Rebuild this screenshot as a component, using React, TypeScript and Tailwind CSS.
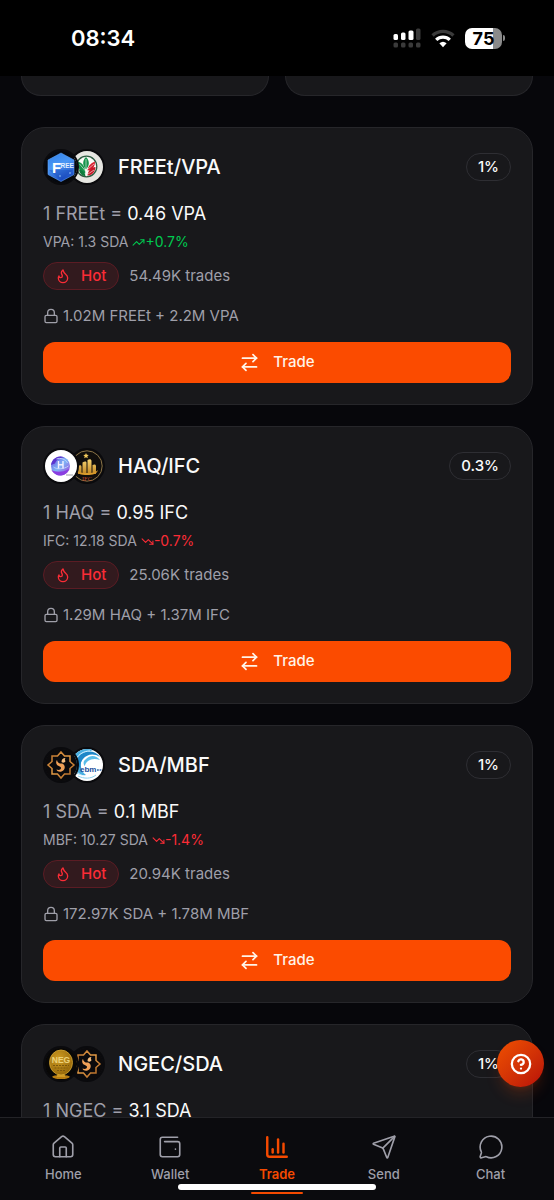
import React from "react";
import {
  ArrowRightLeft,
  ChartColumn,
  CircleQuestionMark,
  Flame,
  House,
  Lock,
  MessageCircle,
  Send,
  TrendingDown,
  TrendingUp,
  WalletMinimal,
} from "lucide-react";

function FreeLogo() {
  return (
    <svg viewBox="0 0 32 32" className="size-full" aria-hidden="true">
      <defs>
        <linearGradient id="free" x1="0" y1="0" x2="0.4" y2="1">
          <stop offset="0" stopColor="#2f7fe8" />
          <stop offset="0.5" stopColor="#4a97f5" />
          <stop offset="1" stopColor="#1d4fc4" />
        </linearGradient>
      </defs>
      <rect width="32" height="32" fill="#05070d" />
      <path d="M16 2 29 9v14.500L16 30.500 3 23.500V9Z" fill="url(#free)" stroke="#5ea5f8" strokeWidth="0.6" />
      <path d="M4 19 16 29.500 28 19" fill="#1745b5" opacity="0.35" />
      <text x="7" y="21.500" fontSize="15" fontWeight="700" fill="#fff" fontFamily="Liberation Sans, sans-serif">F</text>
      <text x="15.500" y="17" fontSize="6.500" fontWeight="700" fill="#e3f0ff" fontFamily="Liberation Sans, sans-serif">REE</text>
      <circle cx="15" cy="25" r="0.8" fill="#9fd0ff" />
      <circle cx="25" cy="22" r="0.8" fill="#9fd0ff" />
    </svg>
  );
}

function VpaLogo() {
  return (
    <svg viewBox="0 0 32 32" className="size-full" aria-hidden="true">
      <rect width="32" height="32" fill="#e6e6e1" />
      <circle cx="15.500" cy="15.500" r="10.300" fill="#fbfbf7" stroke="#2e5b42" strokeWidth="1.300" />
      <path d="M15 6c3.500 3.500 4 8 0 12.500-4-4.500-3.500-9 0-12.500Z" fill="#16944c" />
      <path d="M7 10.500c4.500 1.500 7 5 7.500 12-5.500-1.500-8-5.500-7.500-12Z" fill="#16944c" />
      <path d="M8 18.500c3 .5 6 2.500 6.500 6.500-3.500 0-6-2.500-6.500-6.500Z" fill="#0f7c3d" />
      <path d="M24 10.500c-4.500 1.500-7 5-7.500 9 4.500-.5 7.500-3.500 7.500-9Z" fill="#d81f2e" />
      <path d="M24.500 16c-4.500.5-7.500 3.500-8 8.500 5-.5 7.500-3.500 8-8.500Z" fill="#c81726" />
      <path d="M15 8v17M8.500 13l6 7M23 13l-6 5M23 19l-6 4" stroke="#f7f7f2" strokeWidth="0.600" fill="none" />
    </svg>
  );
}

function HaqLogo() {
  return (
    <svg viewBox="0 0 32 32" className="size-full" aria-hidden="true">
      <defs>
        <linearGradient id="haq" x1="0" y1="0" x2="1" y2="1">
          <stop offset="0" stopColor="#6b4be0" />
          <stop offset="0.5" stopColor="#7fb6f5" />
          <stop offset="1" stopColor="#a033d8" />
        </linearGradient>
      </defs>
      <rect width="32" height="32" fill="#fff" />
      <circle cx="15.500" cy="16" r="9.500" fill="url(#haq)" />
      <path d="M6 15a9.500 9.500 0 0 1 13.500-7.500c-4 0-8 1.500-9.500 6Z" fill="#5b35cf" />
      <path d="M6.500 20c4 2 10 3 17.500-1-2 5-6 6.500-9 6.500S8 23.500 6.500 20Z" fill="#8a3ee0" />
      <path d="M8.500 17c3 2.500 10 2.500 15-1M11.500 9c4-1.500 9 0 11 4" stroke="#c9ddff" strokeWidth="0.8" fill="none" />
      <path d="M13.500 11v7.500M18 11v7.500M13.500 14.800h4.500" stroke="#f3efff" strokeWidth="1.400" />
      <path d="M21 25h7" stroke="#5a5a66" strokeWidth="0.6" />
    </svg>
  );
}

function IfcLogo() {
  return (
    <svg viewBox="0 0 32 32" className="size-full" aria-hidden="true">
      <defs>
        <linearGradient id="ifc" x1="0" y1="0" x2="0" y2="1">
          <stop offset="0" stopColor="#f7d774" />
          <stop offset="1" stopColor="#c08420" />
        </linearGradient>
      </defs>
      <rect width="32" height="32" fill="#17130f" />
      <circle cx="16" cy="16" r="15.200" fill="#100e0c" stroke="#8a7448" strokeWidth="1" />
      <path d="m15 3 .8 1.800 2 .2-1.500 1.300.5 2L15 7.300l-1.800 1 .5-2L12.200 5l2-.2Z" fill="#f5cb5c" />
      <path d="M7 16c2-1 3.500-1 3.500 1v7H7ZM11.500 12.500c2-1.500 4-1.500 4 0V24h-4ZM16.500 10c2-1.500 4-1 4 1v13h-4ZM21.500 15c2-1 3.500-.5 3.500 1v8h-3.500Z" fill="url(#ifc)" />
      <path d="M5 20c1 4 5 5 11 5s10-1 11-5c-2 2.500-6 3-11 3S7 22.500 5 20Z" fill="#d99a2b" />
      <text x="16" y="31" fontSize="6.500" textAnchor="middle" fill="#b5442b" fontFamily="Liberation Serif, serif">IFC</text>
    </svg>
  );
}

function SdaLogo() {
  return (
    <svg viewBox="0 0 32 32" className="size-full" aria-hidden="true">
      <defs>
        <linearGradient id="sda" x1="0" y1="0" x2="1" y2="1">
          <stop offset="0" stopColor="#b8702c" />
          <stop offset="0.5" stopColor="#e29a45" />
          <stop offset="1" stopColor="#a85f20" />
        </linearGradient>
      </defs>
      <rect width="32" height="32" fill="#0b0a0c" />
      <path
        d="M16 3 19.500 7H25V12.500L29 16 25 19.500V25H19.500L16 29 12.500 25H7V19.500L3 16 7 12.500V7H12.500Z"
        fill="none"
        stroke="url(#sda)"
        strokeWidth="1.500"
      />
      <path d="M12 11c.5 3 3 4 5 3.500 3.500 1 4 6.500-.5 8-2 .6-4.500 0-5-2 2 .8 4.500.5 4.500-1.500s-3.500-1.500-4.500-4c-.5-1.500-.5-3 .5-4Z" fill="#f0a057" />
      <path d="M16.500 13c0-2.500 1.500-4 4-4-.8 1-.8 1.800 0 3-.5 1.800-2.500 2.200-4 1Z" fill="#f6bd7d" />
    </svg>
  );
}

function MbfLogo() {
  return (
    <svg viewBox="0 0 32 32" className="size-full" aria-hidden="true">
      <rect width="32" height="32" fill="#fff" />
      <path d="M0 0h27C18 1 11 6 10 14c-.5 6 1 9 5 12C9 27 3 24 0 18Z" fill="#48aee0" />
      <path d="M9 6c6-5 15-5 20 2-6-4-13-3-17 2-3 4-3 7-2 10-5-4-5-9-1-14Z" fill="#1c86c8" />
      <path d="M15 10c4-4 10-4 14 1-5-2-9-1-12 1-2 2-3 3-3 5-2-2-2-5 1-7Z" fill="#58bce8" />
      <path d="M5 10c3-5 8-8 14-8M4 17c0 5 4 9 9 10" stroke="#dff4ff" strokeWidth="1" fill="none" />
      <text x="9" y="23" fontSize="8" fontWeight="700" fill="#1c4f9c" fontFamily="Liberation Sans, sans-serif">ebm</text>
      <path d="M26 21h1.800M28.600 21h1.800" stroke="#3567a8" strokeWidth="1.500" />
      <path d="M7 27c6 3 13 3 18-1" stroke="#8bd0ee" strokeWidth="1" fill="none" />
    </svg>
  );
}

function NgecLogo() {
  return (
    <svg viewBox="0 0 32 32" className="size-full" aria-hidden="true">
      <defs>
        <radialGradient id="ngec" cx="0.4" cy="0.35" r="0.7">
          <stop offset="0" stopColor="#cf9c22" />
          <stop offset="1" stopColor="#93660a" />
        </radialGradient>
      </defs>
      <rect width="32" height="32" fill="#080706" />
      <ellipse cx="16" cy="29" rx="9" ry="2" fill="#b77d12" />
      <path d="M13 25h6l1.500 4h-9Z" fill="#d09a22" />
      <ellipse cx="16" cy="14.500" rx="11.500" ry="12.500" fill="url(#ngec)" stroke="#d9aa34" strokeWidth="0.8" />
      <text x="16" y="15" fontSize="8.500" fontWeight="700" textAnchor="middle" fill="#ecd27a" fontFamily="Liberation Sans, sans-serif">NEG</text>
      <path d="M8 17.500h16M9.500 20h13M12 22.500h8" stroke="#7c580d" strokeWidth="1" strokeDasharray="2 1" />
    </svg>
  );
}

type Pool = {
  base: string;
  quote: string;
  fee: string;
  rate: string;
  logos: [() => React.ReactElement, () => React.ReactElement];
  details?: { price: string; change: string; up: boolean; trades: string; locked: string };
};

const pools: Pool[] = [
  {
    base: "FREEt", quote: "VPA", fee: "1%", rate: "0.46", logos: [FreeLogo, VpaLogo],
    details: { price: "1.3", change: "+0.7%", up: true, trades: "54.49K", locked: "1.02M FREEt + 2.2M VPA" },
  },
  {
    base: "HAQ", quote: "IFC", fee: "0.3%", rate: "0.95", logos: [HaqLogo, IfcLogo],
    details: { price: "12.18", change: "-0.7%", up: false, trades: "25.06K", locked: "1.29M HAQ + 1.37M IFC" },
  },
  {
    base: "SDA", quote: "MBF", fee: "1%", rate: "0.1", logos: [SdaLogo, MbfLogo],
    details: { price: "10.27", change: "-1.4%", up: false, trades: "20.94K", locked: "172.97K SDA + 1.78M MBF" },
  },
  { base: "NGEC", quote: "SDA", fee: "1%", rate: "3.1", logos: [NgecLogo, SdaLogo] },
];

function PoolCard({ pool }: { pool: Pool }) {
  const [First, Second] = pool.logos;
  const d = pool.details;
  return (
    <article className="rounded-3xl border border-[#26262a] bg-[#18181b] p-[21px]">
      <header className="flex items-center">
        <div className="flex">
          <span className="z-10 size-9 overflow-hidden rounded-full border-2 border-[#0a0a0d]"><First /></span>
          <span className="-ml-2.5 size-9 overflow-hidden rounded-full border-2 border-[#0a0a0d]"><Second /></span>
        </div>
        <h2 className="ml-[13px] flex-1 text-xl leading-9 font-medium text-[#fafafa]">{pool.base}/{pool.quote}</h2>
        <span className="rounded-full border border-[#2e2e33] px-[11px] text-[15px] leading-[26px] font-medium text-[#fafafa]">{pool.fee}</span>
      </header>
      <p className="mt-[15px] text-lg leading-7 text-[#9f9fa9]">
        1 {pool.base} = <span className="text-[#fafafa]">{pool.rate} {pool.quote}</span>
      </p>
      {d && (
        <>
          <p className="mt-1 flex items-center text-sm leading-5 text-[#9f9fa9]">
            {pool.quote}: {d.price} SDA
            <span className={d.up ? "ml-1 flex items-center text-[#00c950]" : "ml-1 flex items-center text-[#fb2c36]"}>
              {d.up ? <TrendingUp size={13} /> : <TrendingDown size={13} />}
              {d.change}
            </span>
          </p>
          <div className="mt-2.5 flex items-center gap-2.5 text-[15px]">
            <span className="flex items-center gap-2.5 rounded-full border border-[#5b1c24] bg-[#321a1e] pr-3 pl-[11px] leading-[26px] font-medium text-[#fb2c36]">
              <Flame size={16} />
              Hot
            </span>
            <span className="text-[#9f9fa9]">{d.trades} trades</span>
          </div>
          <p className="mt-3.5 flex items-center gap-1 text-[15px] leading-6 text-[#9f9fa9]">
            <Lock size={16} />
            {d.locked}
          </p>
          <button type="button" className="mt-3.5 flex h-[41px] w-full items-center justify-center gap-[13px] rounded-xl bg-[#fb4b00] text-[15px] font-medium text-[#fff4e8]">
            <ArrowRightLeft size={21} />
            Trade
          </button>
        </>
      )}
    </article>
  );
}

const tabs = [
  { name: "Home", Icon: House },
  { name: "Wallet", Icon: WalletMinimal },
  { name: "Trade", Icon: ChartColumn, active: true },
  { name: "Send", Icon: Send },
  { name: "Chat", Icon: MessageCircle },
];

function StatusBar() {
  return (
    <div className="flex h-19 shrink-0 items-center justify-between bg-black pr-[49px] pl-[71px] text-white">
      <time className="text-[22px] font-semibold">08:34</time>
      <div className="flex items-center gap-2.5">
        <svg width="28" height="20" viewBox="0 0 28 20" role="img" aria-label="Signal strength">
          <g fill="#fff">
            <rect x="0.500" y="6" width="4.500" height="6" rx="1.500" />
            <rect x="8" y="4.500" width="4.500" height="7.500" rx="1.500" />
            <rect x="15.500" y="2.500" width="5" height="9.500" rx="1.500" />
          </g>
          <g fill="#3a3a3a">
            <rect x="23" y="0.500" width="4.500" height="11.500" rx="1.500" />
            <rect x="0.500" y="14.500" width="4.500" height="5" rx="1.500" />
            <rect x="8" y="14.500" width="4.500" height="5" rx="1.500" />
            <rect x="15.500" y="14.500" width="4.500" height="5" rx="1.500" />
            <rect x="23" y="14.500" width="4.500" height="5" rx="1.500" />
          </g>
        </svg>
        <svg width="24" height="19" viewBox="0 0 23 18" fill="none" role="img" aria-label="Wi-Fi">
          <path d="M1.500 6.200a14.500 14.500 0 0 1 20 0" stroke="#3a3a3a" strokeWidth="3.200" />
          <path d="M5 10.300a9.500 9.500 0 0 1 13 0" stroke="#fff" strokeWidth="3.200" />
          <path d="M8 13.600a5.200 5.200 0 0 1 7 0L11.500 17.500Z" fill="#fff" />
        </svg>
        <div className="flex items-center gap-px">
          <span className="h-[21px] w-[37px] rounded-[7px] bg-linear-to-r from-white from-75% to-[#8a8a8a] to-75% text-center text-lg leading-[21px] font-bold text-black">75</span>
          <span className="h-1.5 w-0.5 rounded-r-full bg-[#8a8a8a]" />
        </div>
      </div>
    </div>
  );
}

export default function App() {
  return (
    <div className="relative flex h-screen flex-col overflow-hidden bg-[#07070b] font-['Inter',sans-serif]">
      <StatusBar />
      <main className="min-h-0 flex-1 overflow-y-auto px-[21px] [scrollbar-width:none]">
        <div className="grid grid-cols-2 gap-4">
          <div className="h-5 rounded-b-3xl border border-t-0 border-[#26262a] bg-[#18181b]" />
          <div className="h-5 rounded-b-3xl border border-t-0 border-[#26262a] bg-[#18181b]" />
        </div>
        <div className="mt-[31px] flex flex-col gap-[21px]">
          {pools.map((p) => <PoolCard key={p.base} pool={p} />)}
        </div>
      </main>
      <nav className="flex h-[83px] shrink-0 border-t border-[#232327] bg-[#0b0b0e] px-2.5">
        {tabs.map(({ name, Icon, active }) => (
          <a
            key={name}
            href={`#${name.toLowerCase()}`}
            className={
              active
                ? "relative flex flex-1 flex-col items-center gap-1 pt-4 text-[13px] leading-5 font-semibold text-[#f54a00]"
                : "relative flex flex-1 flex-col items-center gap-1 pt-4 text-[13px] leading-5 font-medium text-[#9f9fa9]"
            }
          >
            <Icon size={26} strokeWidth={active ? 2.25 : 1.5} />
            {name}
            {active && <span className="absolute bottom-1.5 h-0.5 w-[52px] rounded-full bg-[#f54a00]" />}
          </a>
        ))}
      </nav>
      <div className="absolute bottom-2.5 left-1/2 h-1.5 w-[198px] -translate-x-1/2 rounded-full bg-white" />
      <button
        type="button"
        aria-label="Help"
        className="absolute right-2.5 bottom-[113px] z-20 flex size-[47px] items-center justify-center rounded-full bg-linear-to-br from-[#f05000] to-[#b80c08] text-white shadow-lg shadow-[#f54a00]/20"
      >
        <CircleQuestionMark size={22} strokeWidth={2.5} />
      </button>
    </div>
  );
}
